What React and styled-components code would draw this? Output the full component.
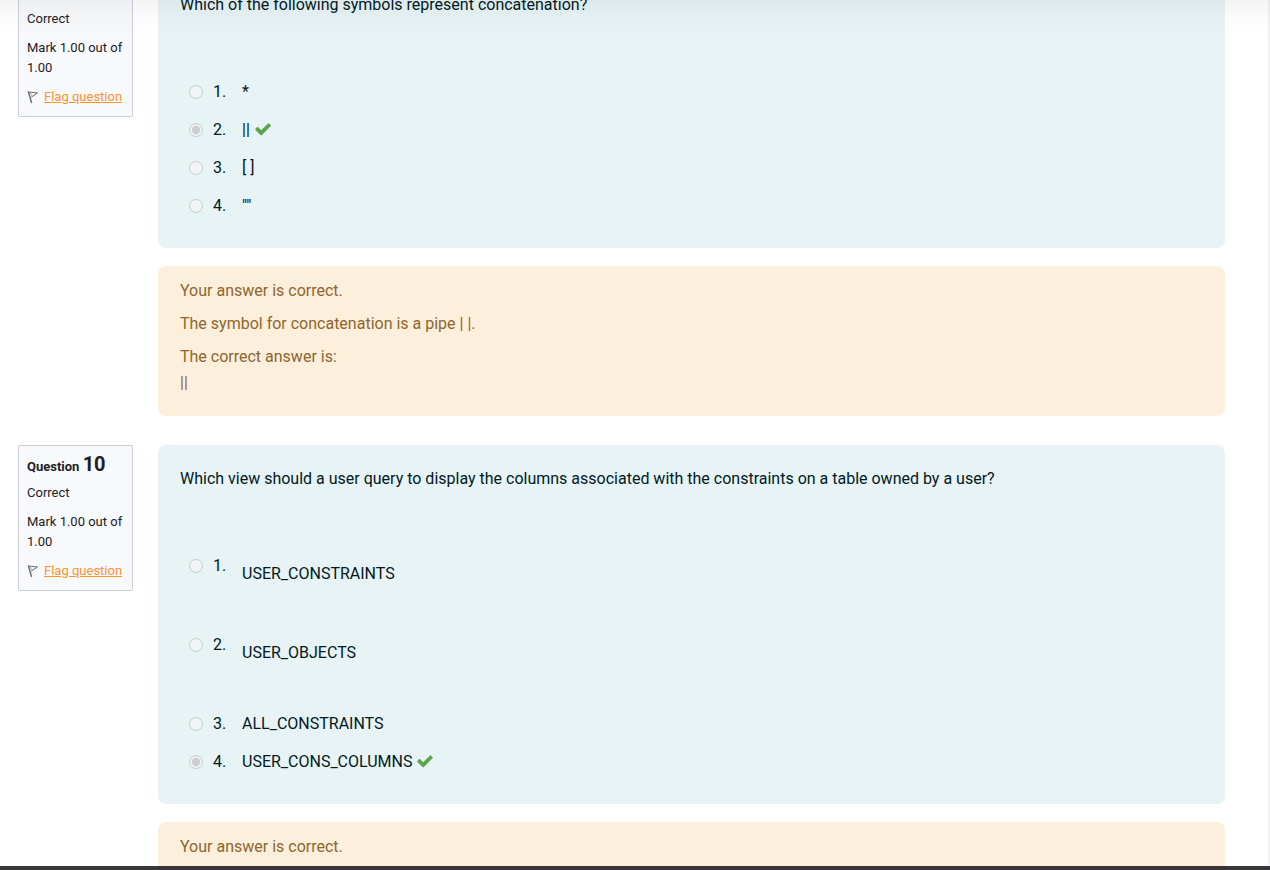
import React from "react";
import styled, { createGlobalStyle } from "styled-components";

const GlobalStyle = createGlobalStyle`
  *, *::before, *::after { box-sizing: border-box; }
  body {
    margin: 0;
    background: #ffffff;
    color: #001a1e;
    font-family: Roboto, "Liberation Sans", sans-serif;
    font-size: 16px;
    line-height: 26px;
  }
  h3, p, ol { margin: 0; padding: 0; }
`;

const Shell = styled.div`
  position: relative;
  display: flex;
  flex-direction: column;
  height: 100vh;
  overflow: hidden;
`;

const TopShadow = styled.div`
  position: absolute;
  inset: 0 0 auto 0;
  height: 38px;
  pointer-events: none;
  background: linear-gradient(rgba(0, 10, 20, 0.045), rgba(0, 10, 20, 0.015) 50%, rgba(0, 10, 20, 0));
`;

const Viewport = styled.main`
  flex: 1;
  min-height: 0;
  overflow: hidden;
  padding: 0 43px 0 18px;
  border-right: 2px solid #f0f0f6;
`;

const QuestionList = styled.div`
  display: flex;
  flex-direction: column;
  gap: 29px;
  margin-top: -29px;
`;

const BottomBar = styled.footer`
  flex: none;
  height: 4px;
  background: #373639;
`;

const Question = styled.section`
  display: flex;
  align-items: flex-start;
  gap: 25px;
`;

const Info = styled.aside`
  flex: none;
  display: flex;
  flex-direction: column;
  gap: 9px;
  width: 115px;
  padding: 8px 8px 9px;
  border: 1px solid #cad0d7;
  border-radius: 2px;
  background: #f8f9fb;
  color: #1d2125;
  font-size: 13px;
  line-height: 20px;
`;

const InfoTitle = styled.h3`
  font-size: 20px;
  line-height: 20px;
  font-weight: 700;
  white-space: pre;
`;

const TitleWord = styled.span`
  font-size: 13px;
  line-height: 13px;
`;

const FlagRow = styled.div`
  display: flex;
  align-items: center;
  gap: 5px;
  white-space: nowrap;
`;

const FlagLink = styled.a`
  color: #f79434;
  text-decoration: underline;
`;

const Content = styled.div`
  flex: 1;
  min-width: 0;
  display: flex;
  flex-direction: column;
  gap: 18px;
`;

const Formulation = styled.div`
  padding: 21px 22px 29px;
  border-radius: 8px;
  background: #e7f3f5;
`;

const Prompt = styled.p`
  margin-bottom: 61px;
`;

const Answers = styled.ol`
  display: flex;
  flex-direction: column;
  gap: 12px;
  list-style: none;
`;

const Answer = styled.li`
  display: flex;
  align-items: flex-start;
  padding-left: 9px;
  min-height: ${(p) => (p.$tall ? "67px" : "26px")};
`;

const Radio = styled.input`
  width: 14px;
  height: 14px;
  margin: 6px 10px 0 0;
`;

const Label = styled.label`
  display: flex;
`;

const Index = styled.span`
  width: 29px;
`;

const AnswerText = styled.span`
  padding-top: ${(p) => (p.$tall ? "8px" : "0")};
`;

const Check = styled.svg`
  width: 18px;
  height: 18px;
  margin: 3px 0 0 4px;
`;

const Feedback = styled.div`
  display: flex;
  flex-direction: column;
  gap: 7px;
  padding: 12px 22px 20px;
  border-radius: 8px;
  background: #fcefdc;
  color: #8e662e;
`;

function FlagIcon() {
  return (
    <svg width="12" height="14" viewBox="0 0 12 14" fill="none" stroke="#6c6c6c" aria-hidden="true">
      <path d="M1.3 1.5 L4.6 13" strokeWidth="1.4" />
      <path d="M1.5 2 L10.5 3 L4.2 7.2" strokeWidth="1" />
      <path d="M3.2 3 L5 6" stroke="#aaaaaa" strokeWidth="1" />
    </svg>
  );
}

function CheckIcon() {
  return (
    <Check viewBox="0 0 1792 1792" role="img" aria-label="Correct">
      <path
        fill="#5ba54c"
        d="M1671 566q0 40-28 68l-724 724-136 136q-28 28-68 28t-68-28l-136-136-362-362q-28-28-28-68t28-68l136-136q28-28 68-28t68 28l294 295 656-657q28-28 68-28t68 28l136 136q28 28 28 68z"
      />
    </Check>
  );
}

function InfoBox({ number }) {
  return (
    <Info>
      <InfoTitle>
        <TitleWord>Question </TitleWord>
        {number}
      </InfoTitle>
      <div>Correct</div>
      <div>Mark 1.00 out of 1.00</div>
      <FlagRow>
        <FlagIcon />
        <FlagLink href="#flag">Flag question</FlagLink>
      </FlagRow>
    </Info>
  );
}

const questions = [
  {
    number: 9,
    prompt: "Which of the following symbols represent concatenation?",
    answers: [
      { text: "*" },
      { text: "||", correct: true },
      { text: "[ ]" },
      { text: '""' },
    ],
    feedback: [
      "Your answer is correct.",
      "The symbol for concatenation is a pipe | |.",
      <>
        The correct answer is:
        <br />
        ||
      </>,
    ],
  },
  {
    number: 10,
    prompt:
      "Which view should a user query to display the columns associated with the constraints on a table owned by a user?",
    answers: [
      { text: "USER_CONSTRAINTS", tall: true },
      { text: "USER_OBJECTS", tall: true },
      { text: "ALL_CONSTRAINTS" },
      { text: "USER_CONS_COLUMNS", correct: true },
    ],
    feedback: ["Your answer is correct."],
  },
];

export default function App() {
  return (
    <Shell>
      <GlobalStyle />
      <Viewport>
        <QuestionList>
          {questions.map((q) => (
            <Question key={q.number}>
              <InfoBox number={q.number} />
              <Content>
                <Formulation>
                  <Prompt>{q.prompt}</Prompt>
                  <Answers>
                    {q.answers.map((a, i) => {
                      const id = `q${q.number}-answer${i + 1}`;
                      return (
                        <Answer key={id} $tall={a.tall}>
                          <Radio
                            type="radio"
                            id={id}
                            name={`q${q.number}`}
                            defaultChecked={a.correct}
                            disabled
                          />
                          <Label htmlFor={id}>
                            <Index>{i + 1}.</Index>
                            <AnswerText $tall={a.tall}>{a.text}</AnswerText>
                          </Label>
                          {a.correct && <CheckIcon />}
                        </Answer>
                      );
                    })}
                  </Answers>
                </Formulation>
                <Feedback>
                  {q.feedback.map((line, i) => (
                    <p key={i}>{line}</p>
                  ))}
                </Feedback>
              </Content>
            </Question>
          ))}
        </QuestionList>
      </Viewport>
      <BottomBar />
      <TopShadow />
    </Shell>
  );
}
